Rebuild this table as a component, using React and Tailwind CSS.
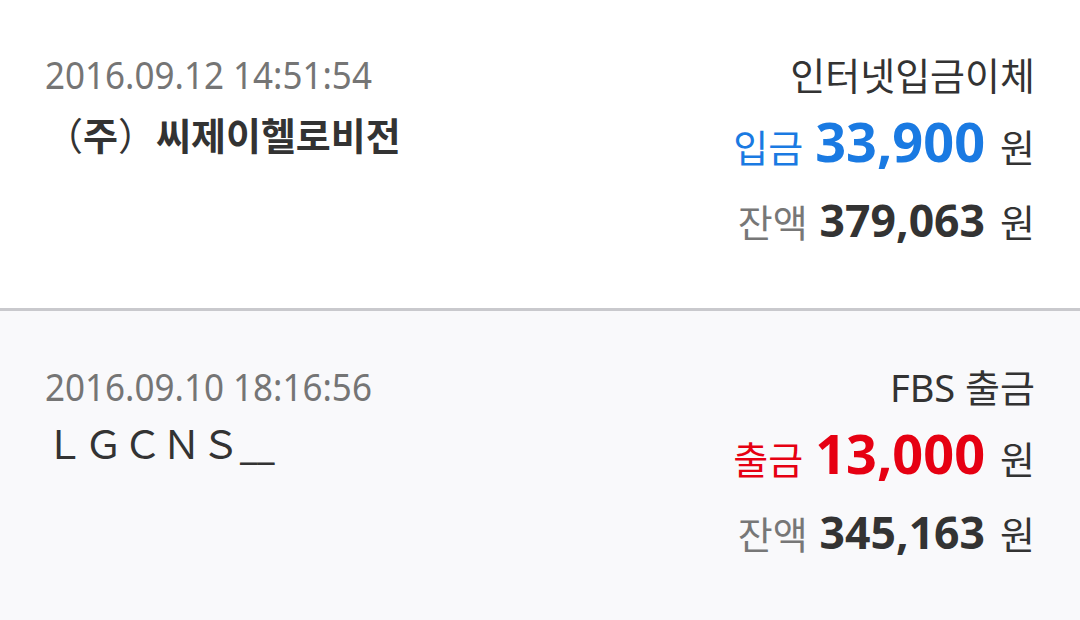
const rows = [
  {
    date: "2016.09.12 14:51:54",
    name: "（주）씨제이헬로비전",
    type: "인터넷입금이체",
    kind: "입금",
    amount: "33,900",
    balance: "379,063",
    deposit: true,
  },
  {
    date: "2016.09.10 18:16:56",
    name: "ＬＧＣＮＳ__",
    type: "FBS 출금",
    kind: "출금",
    amount: "13,000",
    balance: "345,163",
    deposit: false,
  },
];

const font = { fontFamily: "'Noto Sans', 'Noto Sans CJK KR', sans-serif" };

const Name = ({ text }) => {
  if (text.startsWith("（")) {
    let close = text.indexOf("）");
    return (
      <div className="text-[38px] leading-[46px] mt-[14px] font-bold text-[#333]">
        <span className="font-normal">（</span>
        {text.slice(1, close)}
        <span className="font-normal">）</span>
        {text.slice(close + 1)}
      </div>
    );
  }
  return (
    <div className="text-[39px] leading-[46px] mt-[11px] text-[#333]">{text}</div>
  );
};

const TxRow = ({ tx, first }) => {
  let color = tx.deposit ? "text-[#1a7ae2]" : "text-[#e60012]";
  return (
    <div
      className={`flex justify-between pl-[45px] pr-[45px] ${
        first
          ? "h-[311px] pt-[52px] bg-white border-b-[3px] border-[#c9c9cd]"
          : "h-[309px] pt-[53px] bg-[#f9f9fb]"
      }`}
    >
      <div className="flex flex-col">
        <div className="text-[35px] leading-[46px] text-[#757575]">
          <span className="inline-block scale-y-[1.08]">{tx.date}</span>
        </div>
        <Name text={tx.name} />
      </div>
      <div className="flex flex-col items-end">
        <div className="text-[38px] leading-[46px] text-[#333]">{tx.type}</div>
        <div className="flex items-baseline mt-[14px]">
          <span className={`text-[38px] ${color}`}>{tx.kind}</span>
          <span className={`ml-[12px] text-[54px] leading-[58px] font-bold ${color}`}>
            {tx.amount}
          </span>
          <span className="ml-[15px] text-[38px] text-[#333]">원</span>
        </div>
        <div className="flex items-baseline mt-[18px]">
          <span className="text-[38px] text-[#777]">잔액</span>
          <span className="ml-[12px] text-[44.5px] leading-[50px] font-bold text-[#333]">
            {tx.balance}
          </span>
          <span className="ml-[15px] text-[38px] text-[#333]">원</span>
        </div>
      </div>
    </div>
  );
};

export default function App() {
  return (
    <div className="w-[1080px] h-[620px] overflow-hidden bg-white" style={font}>
      {rows.map((tx, i) => (
        <TxRow key={i} tx={tx} first={i === 0} />
      ))}
    </div>
  );
}
